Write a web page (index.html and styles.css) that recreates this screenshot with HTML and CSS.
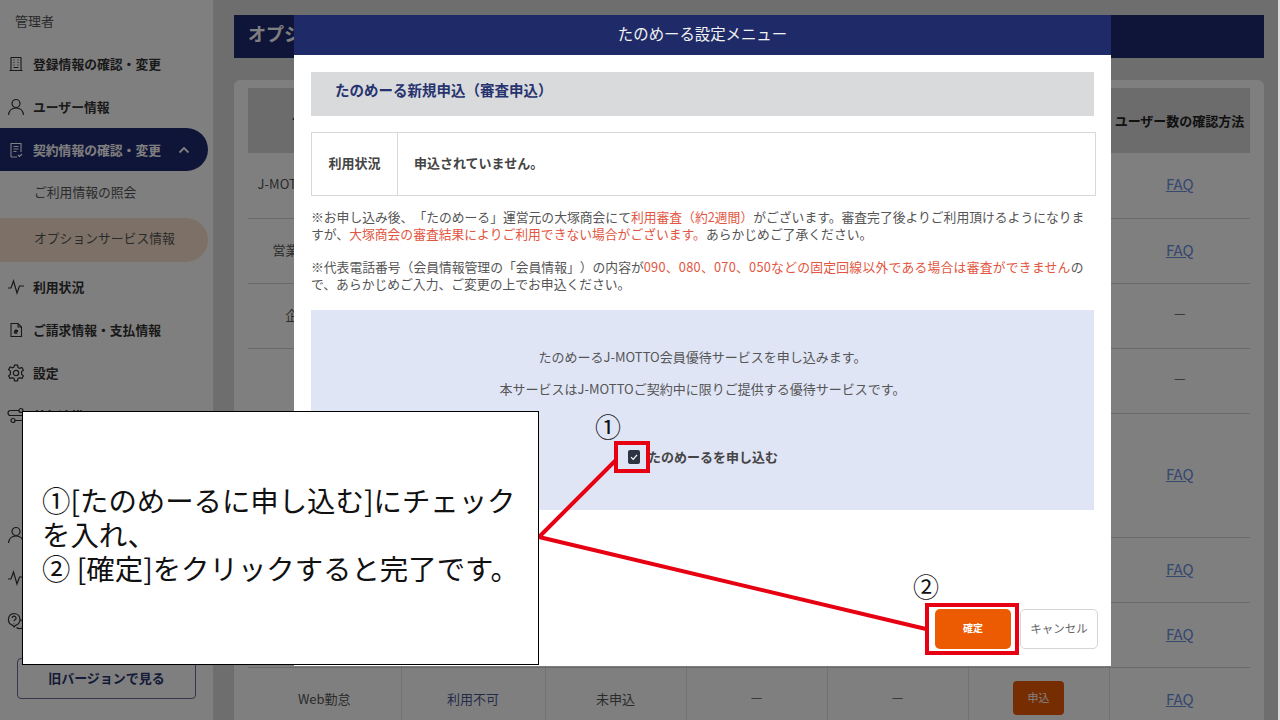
FILE: index.html
```html
<!DOCTYPE html>
<html lang="ja">
<head>
<meta charset="utf-8">
<title>たのめーる設定メニュー</title>
<link rel="stylesheet" href="styles.css">
</head>
<body>
<div class="page">
  <aside class="sidebar">
    <div class="role">管理者</div>
    <nav class="nav">
      <a class="nav-item"><svg class="ico" viewBox="0 0 16 16"><path d="M3 1.500h10v13H3zM1.500 14.500h13M5.500 4h1M9.500 4h1M5.500 6.500h1M9.500 6.500h1M5.500 9h1M9.500 9h1M5.500 11.500h5"/></svg>登録情報の確認・変更</a>
      <a class="nav-item"><svg class="ico ico-lg" viewBox="0 0 18 18"><circle cx="9" cy="5.500" r="4"/><path d="M1.500 17c.5-4.500 3.500-7 7.500-7s7 2.500 7.500 7"/></svg>ユーザー情報</a>
      <a class="nav-item active"><svg class="ico" viewBox="0 0 16 16"><path d="M3 15V1.500h10V10M5.500 4.500h5M5.500 7h5M5.500 9.500h3M3 15h6M10 13l1.500 1.500L14 12"/></svg>契約情報の確認・変更<svg class="chev" viewBox="0 0 12 8"><path d="M1.500 6.500L6 2l4.500 4.500"/></svg></a>
      <a class="nav-sub">ご利用情報の照会</a>
      <a class="nav-sub current">オプションサービス情報</a>
      <a class="nav-item"><svg class="ico ico-lg" viewBox="0 0 18 18"><path d="M1 10h3l2.500-7 3.500 12 2.500-7H17"/></svg>利用状況</a>
      <a class="nav-item"><svg class="ico" viewBox="0 0 16 16"><path d="M3 1.500h7l3.500 3.500v9.500H3zM10 1.500V5h3.500M8 7v5M6.500 8.500h3v1h-3v1.500h3"/></svg>ご請求情報・支払情報</a>
      <a class="nav-item"><svg class="ico ico-lg" viewBox="0 0 18 18"><circle cx="9" cy="9" r="2.700"/><path d="M7.500 1.200h3l.5 2.300 1.700.9 2.200-.9 1.500 2.600-1.800 1.500v2.800l1.800 1.500-1.500 2.600-2.200-.9-1.700.9-.5 2.300h-3l-.5-2.300-1.700-.9-2.200.9-1.500-2.600 1.800-1.500V7.100L1.600 5.600l1.500-2.600 2.200.9L7 3z"/></svg>設定</a>
      <a class="nav-item"><svg class="ico ico-lg" viewBox="0 0 18 18"><path d="M12 3.500H3.500a2.500 2.500 0 0 0 0 5h11a2.500 2.500 0 0 1 0 5H8"/><circle cx="14" cy="3.500" r="2"/><circle cx="6" cy="13.500" r="2"/></svg>外部連携</a>
      <div class="nav-gap"></div>
      <a class="nav-item"><svg class="ico ico-lg" viewBox="0 0 18 18"><circle cx="9" cy="5.500" r="4"/><path d="M1.500 17c.5-4.500 3.500-7 7.500-7s7 2.500 7.500 7"/></svg>ユーザー管理</a>
      <a class="nav-item"><svg class="ico ico-lg" viewBox="0 0 18 18"><path d="M1 10h3l2.500-7 3.500 12 2.500-7H17"/></svg>操作ログ</a>
      <a class="nav-item"><svg class="ico ico-lg" viewBox="0 0 18 18"><path d="M7 1.500a6 6 0 0 1 1.500 11.800L7 15l-1-1.700A6 6 0 0 1 7 1.500zM5.200 6a1.900 1.900 0 1 1 2.800 1.700c-.7.400-1 .8-1 1.600M7 11v.5M12.500 7.500A5 5 0 0 1 16 15.500l.5 1.500-2-.7a5 5 0 0 1-5-.8"/></svg>ヘルプ</a>
    </nav>
    <a class="old-version">旧バージョンで見る</a>
  </aside>
  <main class="main">
    <h1 class="page-title">オプションサービス情報</h1>
    <section class="card">
      <table class="services">
        <colgroup>
          <col class="c1"><col class="c2"><col class="c3"><col class="c4"><col class="c5"><col class="c6"><col class="c7">
        </colgroup>
        <thead>
          <tr><th>サービス名</th><th>利用状況</th><th>申込状況</th><th>契約数</th><th>利用数</th><th>申込</th><th>ユーザー数の確認方法</th></tr>
        </thead>
        <tbody>
          <tr><td>J-MOTTOスケジュール</td><td></td><td></td><td></td><td></td><td></td><td><a class="faq">FAQ</a></td></tr>
          <tr><td>営業支援システム</td><td></td><td></td><td></td><td></td><td></td><td><a class="faq">FAQ</a></td></tr>
          <tr><td>企業情報検索</td><td></td><td></td><td></td><td></td><td></td><td class="dash">—</td></tr>
          <tr><td></td><td></td><td></td><td></td><td></td><td></td><td class="dash">—</td></tr>
          <tr class="tall"><td></td><td></td><td></td><td></td><td></td><td></td><td><a class="faq">FAQ</a></td></tr>
          <tr><td></td><td></td><td></td><td></td><td></td><td></td><td><a class="faq">FAQ</a></td></tr>
          <tr><td></td><td></td><td></td><td></td><td></td><td></td><td><a class="faq">FAQ</a></td></tr>
          <tr><td>Web勤怠</td><td class="muted">利用不可</td><td>未申込</td><td class="dash">—</td><td class="dash">—</td><td><a class="apply">申込</a></td><td><a class="faq">FAQ</a></td></tr>
        </tbody>
      </table>
    </section>
  </main>
  <div class="overlay"></div>

  <div class="modal">
    <header class="modal-head">たのめーる設定メニュー</header>
    <div class="modal-body">
      <h2 class="section-title">たのめーる新規申込（審査申込）</h2>
      <div class="status">
        <div class="status-label">利用状況</div>
        <div class="status-value">申込されていません。</div>
      </div>
      <p class="note">※お申し込み後、「たのめーる」運営元の大塚商会にて<em>利用審査（約2週間）</em>がございます。審査完了後よりご利用頂けるようになりますが、<em>大塚商会の審査結果によりご利用できない場合がございます。</em>あらかじめご了承ください。</p>
      <p class="note">※代表電話番号（会員情報管理の「会員情報」）の内容が<em>090、080、070、050などの固定回線以外である場合は審査ができません</em>ので、あらかじめご入力、ご変更の上でお申込ください。</p>
      <div class="panel">
        <p>たのめーるJ-MOTTO会員優待サービスを申し込みます。</p>
        <p>本サービスはJ-MOTTOご契約中に限りご提供する優待サービスです。</p>
        <label class="agree"><span class="check"><svg viewBox="0 0 12 12"><path d="M3 6.200l2.200 2.200L9 3.800"/></svg></span>たのめーるを申し込む</label>
      </div>
    </div>
    <footer class="modal-foot">
      <a class="btn btn-primary">確定</a>
      <a class="btn btn-cancel">キャンセル</a>
    </footer>
  </div>

  <svg class="leaders" viewBox="0 0 1280 720"><path d="M539 537L616 460M539 537L926 629"/></svg>
  <div class="mark mark-check"></div>
  <div class="mark mark-confirm"></div>
  <span class="num num-1">①</span>
  <span class="num num-2">②</span>
  <div class="callout">①[たのめーるに申し込む]にチェックを入れ、<br>② [確定]をクリックすると完了です。</div>
</div>
</body>
</html>
```
FILE: styles.css
```css
* { box-sizing: border-box; }
html, body { margin: 0; height: 720px; overflow: hidden; background: #fff; }
body { font-family: "Noto Sans CJK JP", "Noto Sans", sans-serif; color: #333; font-size: 13px; text-spacing-trim: space-all; }
a { color: inherit; text-decoration: none; }
p, h1, h2 { margin: 0; }

.page { position: relative; display: flex; width: 1280px; height: 720px; overflow: hidden; }

.sidebar { position: relative; width: 213px; flex: none; background: #fff; }
.role { height: 42px; line-height: 42px; padding-left: 15px; font-size: 13px; color: #555; }
.nav { display: flex; flex-direction: column; }
.nav-item { display: flex; align-items: center; gap: 8px; width: 208px; height: 43px; padding-left: 7px; font-weight: 700; font-size: 12.800px; color: #333; }
.nav-item.active { background: #1f2b70; color: #fff; border-radius: 0 22px 22px 0; }
.ico { width: 18px; height: 18px; padding: 1px; flex: none; fill: none; stroke: currentColor; stroke-width: 1.100; }
.ico-lg { padding: 0; stroke-width: 1.200; }
.chev { width: 12px; height: 8px; margin-left: 9px; fill: none; stroke: #fff; stroke-width: 1.800; }
.nav-sub { display: flex; align-items: center; width: 208px; height: 43px; padding: 0 0 2px 34px; font-size: 12.800px; color: #555; }
.nav-sub.current { height: 44px; margin-top: 4px; margin-bottom: 3px; padding-bottom: 6px; background: #fbe3cf; border-radius: 0 22px 22px 0; }
.nav-gap { height: 76px; }
.old-version { position: absolute; left: 17px; top: 658px; width: 179px; height: 41px; display: flex; align-items: center; justify-content: center; padding-bottom: 3px; font-weight: 700; font-size: 13px; color: #2b3570; border: 1.500px solid #6b7096; border-radius: 4px; background: #fff; }

.main { flex: 1; padding: 15px 16px 0 21px; background: #dcdcdc; }
.page-title { height: 43px; line-height: 36px; padding-left: 14px; font-size: 18px; font-weight: 700; color: #fff; background: #1f2b70; white-space: nowrap; overflow: hidden; }
.card { margin-top: 22px; padding: 8px 14px 0; height: 700px; background: #fff; border-radius: 6px; }
.services { width: 1002px; table-layout: fixed; border-collapse: collapse; font-size: 13px; }
.c1 { width: 153px; } .c2 { width: 144px; } .c3 { width: 141px; } .c4 { width: 141px; } .c5 { width: 141px; } .c6 { width: 141px; } .c7 { width: 141px; }
.services th { height: 65px; background: #d8d8d8; font-weight: 700; font-size: 13px; color: #222; padding: 0; white-space: nowrap; }
.services td { height: 65px; padding: 0 0 3px; text-align: center; border-bottom: 1px solid #d5d5d5; border-left: 1px solid #e2e2e2; color: #555; white-space: nowrap; }
.services td:first-child { border-left: 0; }
.services .tall td { height: 124px; }
.services .muted { color: #4a5590; }
.services .dash { padding-bottom: 7px; }
.faq { color: #6a90e0; text-decoration: underline; font-size: 15px; }
.apply { display: inline-flex; align-items: center; justify-content: center; width: 51px; height: 34px; padding-bottom: 2px; border-radius: 4px; background: #ec5b02; color: #fff; font-size: 11px; }

.overlay { position: absolute; inset: 0 2px 0 0; background: rgba(0, 0, 0, .5); }

.modal { position: absolute; left: 294px; top: 15px; width: 817px; height: 651px; display: flex; flex-direction: column; background: #fff; }
.modal-head { height: 40px; flex: none; display: flex; align-items: center; justify-content: center; padding-bottom: 4px; background: #1f2b68; color: #f2f2f2; font-size: 15.400px; }
.modal-body { flex: 1; padding: 17px 17px 0; }
.section-title { height: 44px; line-height: 35px; padding-left: 24px; background: #d9dadc; font-size: 14.500px; font-weight: 700; color: #27336f; }
.status { display: flex; height: 64px; margin-top: 16px; width: 785px; border: 1px solid #d8d8d8; align-items: stretch; }
.status-label { width: 86px; display: flex; align-items: center; justify-content: center; padding-bottom: 4px; border-right: 1px solid #d8d8d8; font-weight: 700; color: #444; }
.status-value { display: flex; align-items: center; padding: 0 0 4px 16px; font-weight: 700; font-size: 13px; color: #444; }
.note { margin-top: 13px; width: 783px; font-size: 12.800px; line-height: 16.500px; color: #555; }
.note + .note { margin-top: 17px; }
.note + .note em { letter-spacing: .25px; }
.note em { font-style: normal; color: #e2563f; }
.panel { width: 783px; height: 200px; margin-top: 18px; padding-top: 37px; background: #e0e5f6; text-align: center; color: #555; font-size: 13px; }
.panel p { line-height: 20px; margin-bottom: 12px; }
.agree { display: flex; align-items: center; justify-content: center; gap: 8px; margin-top: 48px; padding-left: 1px; font-weight: 700; color: #444; }
.check { width: 12px; height: 14px; border-radius: 2px; background: #2c3442; display: flex; align-items: center; justify-content: center; }
.check svg { width: 12px; height: 12px; fill: none; stroke: #fff; stroke-width: 1.200; }

.modal-foot { flex: none; height: 57px; padding: 0 13px 17px 0; display: flex; justify-content: flex-end; align-items: flex-start; gap: 9px; }
.btn { display: flex; align-items: center; justify-content: center; height: 40px; padding-bottom: 3px; border-radius: 5px; }
.btn-primary { width: 76px; background: #ec5b02; color: #fff; font-size: 10px; font-weight: 700; }
.btn-cancel { width: 78px; border: 1px solid #d5d5d5; color: #666; font-size: 11.500px; }

.leaders { position: absolute; inset: 0; width: 1280px; height: 720px; pointer-events: none; }
.leaders path { fill: none; stroke: #e60012; stroke-width: 4; }
.mark { position: absolute; border: 4px solid #e60012; }
.mark-check { left: 614px; top: 441px; width: 36px; height: 32px; }
.mark-confirm { left: 925px; top: 603px; width: 94px; height: 52px; }
.num { position: absolute; font-size: 26px; line-height: 30px; color: #111; }
.num-1 { left: 595px; top: 411px; }
.num-2 { left: 913px; top: 571px; }
.callout { position: absolute; left: 22px; top: 411px; width: 517px; height: 254px; padding: 71px 14px 0 19px; background: #fff; border: 1px solid #000; font-size: 28.400px; line-height: 34px; color: #111; }
```
